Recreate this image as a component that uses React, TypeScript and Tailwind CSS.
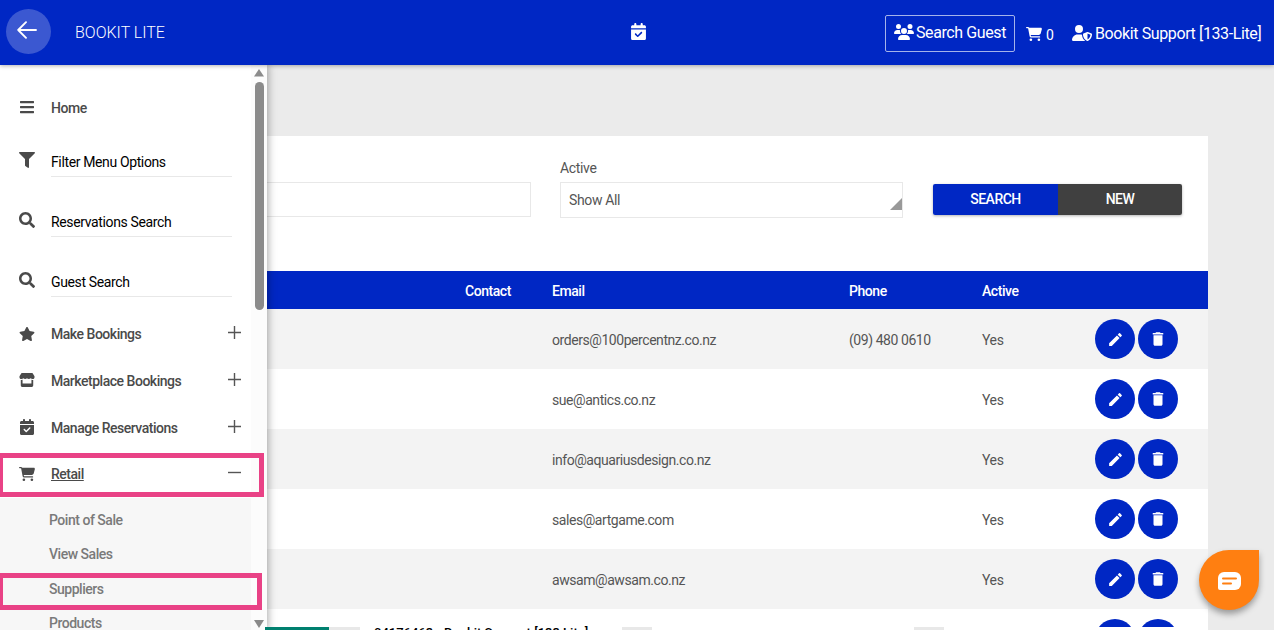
import React from 'react';
import { FaBars, FaFilter, FaSearch, FaStar } from 'react-icons/fa';
import { FaCalendarCheck, FaCartShopping, FaStore, FaUserShield } from 'react-icons/fa6';
import { MdDelete, MdEdit } from 'react-icons/md';

const suppliers = [
  { email: 'orders@100percentnz.co.nz', phone: '(09) 480 0610', active: 'Yes' },
  { email: 'sue@antics.co.nz', phone: '', active: 'Yes' },
  { email: 'info@aquariusdesign.co.nz', phone: '', active: 'Yes' },
  { email: 'sales@artgame.com', phone: '', active: 'Yes' },
  { email: 'awsam@awsam.co.nz', phone: '', active: 'Yes' },
  { email: '', phone: '', active: '' },
];

const searches = [
  { label: 'Filter Menu Options', icon: FaFilter },
  { label: 'Reservations Search', icon: FaSearch },
  { label: 'Guest Search', icon: FaSearch },
];

const menus = [
  { label: 'Make Bookings', icon: FaStar, open: false },
  { label: 'Marketplace Bookings', icon: FaStore, open: false },
  { label: 'Manage Reservations', icon: FaCalendarCheck, open: false },
  { label: 'Retail', icon: FaCartShopping, open: true },
];

const GroupIcon: React.FC = () => (
  <svg viewBox="0 0 640 512" className="h-4 w-5 shrink-0 fill-current">
    <path d="M144 0a80 80 0 1 1 0 160A80 80 0 1 1 144 0zM512 0a80 80 0 1 1 0 160A80 80 0 1 1 512 0zM0 298.700C0 239.800 47.800 192 106.700 192h42.700c15.900 0 31 3.500 44.600 9.700c-1.300 7.200-1.900 14.700-1.900 22.300c0 38.200 16.800 72.500 43.300 96H21.300C9.600 320 0 310.400 0 298.700zM405.300 320h-.7c26.600-23.500 43.300-57.800 43.300-96c0-7.600-.7-15-1.900-22.300c13.600-6.300 28.700-9.700 44.600-9.700h42.700C592.200 192 640 239.800 640 298.700c0 11.800-9.600 21.300-21.300 21.300H405.300zM224 224a96 96 0 1 1 192 0a96 96 0 1 1-192 0zM128 485.300C128 411.700 187.700 352 261.300 352h117.400C452.300 352 512 411.700 512 485.300c0 14.700-11.900 26.700-26.700 26.700H154.700C139.900 512 128 500.100 128 485.300z" />
  </svg>
);

const Header: React.FC = () => (
  <header className="relative z-30 flex h-[65px] shrink-0 items-center bg-[#0027c4] text-white shadow-[0_1px_4px_rgba(0,0,0,0.3)]">
    <div className="flex w-[630px] items-center pb-[3px] pl-1.5">
      <button className="flex size-[45px] items-center justify-center rounded-full bg-[#3b58d1]">
        <svg viewBox="0 0 20 18" className="mr-[3px] mb-0.5 h-[18px] w-5" fill="none" stroke="currentColor" strokeWidth="1.9" strokeLinecap="round" strokeLinejoin="round">
          <path d="M9 1.200 1.200 9 9 16.800M1.200 9H19" />
        </svg>
      </button>
      <span className="mt-[3px] ml-6 text-base font-light">BOOKIT LITE</span>
    </div>
    <FaCalendarCheck className="-mt-0.5 size-[17px]" />
    <div className="ml-auto flex w-[389px] items-center">
      <button className="mt-px flex h-[37px] w-[130px] items-center rounded-xs border border-[#a5b3ea] pl-2">
        <span className="pb-0.5"><GroupIcon /></span>
        <span className="ml-0.5 text-base tracking-[-0.4px] whitespace-nowrap">Search Guest</span>
      </button>
      <FaCartShopping className="mt-0.5 ml-[11px] size-4" />
      <span className="mt-1 ml-1 text-sm">0</span>
      <FaUserShield className="ml-[18px] h-4 w-5" />
      <span className="mt-0.5 ml-[3px] text-base tracking-[-0.38px] whitespace-nowrap">Bookit Support [133-Lite]</span>
    </div>
  </header>
);

const Sidebar: React.FC = () => (
  <aside className="absolute inset-y-0 left-0 z-20 flex w-[267px] overflow-hidden bg-white text-sm font-medium tracking-[-0.48px] text-[#4a4a4a] shadow-[1px_0_8px_rgba(0,0,0,0.35)]">
    <nav className="flex w-[251px] shrink-0 flex-col">
      <div className="mt-5 flex h-[46px] shrink-0 items-center pl-[19px]">
        <FaBars className="mb-0.5 size-4" />
        <span className="ml-4">Home</span>
      </div>
      {searches.map(({ label, icon: Icon }) => (
        <div key={label} className="flex h-[60px] shrink-0 items-center pl-[19px]">
          <Icon className="mb-0.5 size-4" />
          <span className="ml-4 flex h-8 w-[181px] items-center border-b border-[#e8e8e8] pt-0.5 font-normal tracking-[-0.37px] text-black">{label}</span>
        </div>
      ))}
      {menus.map(({ label, icon: Icon, open }) => (
        <div key={label} className="flex h-[46.670px] shrink-0 items-center pl-[19px]">
          <Icon className="mb-px size-4 shrink-0" />
          <span className={open ? 'ml-4 underline' : 'ml-4'}>{label}</span>
          <svg viewBox="0 0 13 13" className="mr-2.5 mb-[3px] ml-auto size-[13px]" stroke="#555" strokeWidth="1.400">
            <path d={open ? 'M0 6.500h13' : 'M0 6.500h13M6.500 0v13'} />
          </svg>
        </div>
      ))}
      <div className="flex grow flex-col bg-[#f7f7f7] pt-[5px] pl-[49px] text-[#7a7a7a]">
        {['Point of Sale', 'View Sales', 'Suppliers', 'Products'].map((item) => (
          <span key={item} className="flex h-[34.500px] shrink-0 items-center">{item}</span>
        ))}
      </div>
    </nav>
    {/* Scrollbar */}
    <div className="flex w-4 flex-col items-center bg-[#fcfcfc] pt-1">
      <svg viewBox="0 0 10 8" className="h-2 w-2.5 fill-[#8b8b8b]"><path d="M5 0 10 7.500H0z" /></svg>
      <div className="mt-[5px] h-[228px] w-[9px] rounded-full bg-[#8b8b8b]" />
      <svg viewBox="0 0 10 8" className="mt-auto mb-0.5 h-2 w-2.5 fill-[#8b8b8b]"><path d="M5 8 10 0H0z" /></svg>
    </div>
    {/* Highlighted entries */}
    <div className="absolute top-[388px] left-[-2px] h-11 w-[266px] border-[5px] border-[#e94286]" />
    <div className="absolute top-[508px] left-[-2px] h-[37px] w-[264px] border-[5px] border-[#e94286]" />
  </aside>
);

const Filters: React.FC = () => (
  <div className="flex h-[135px] shrink-0 pt-6 text-sm text-[#555]">
    <div className="mt-[22px] h-[35px] w-[531px] border border-[#e8e8e8]" />
    <div className="ml-[29px] w-[343px] tracking-[-0.35px]">
      <div className="h-[22px] leading-4">Active</div>
      <div className="flex h-9 items-center justify-between border border-[#e8e8e8] pl-2">
        <span>Show All</span>
        <svg viewBox="0 0 12 12" className="mt-2 size-3 fill-[#999]"><path d="M12 0v12H0z" /></svg>
      </div>
    </div>
    <div className="mt-6 ml-[30px] flex h-[31px] w-[249px] overflow-hidden rounded-xs text-center leading-[31px] font-medium tracking-[-0.5px] text-white shadow-[0_1px_3px_rgba(0,0,0,0.3)]">
      <button className="w-[125px] bg-[#0027c4]">SEARCH</button>
      <button className="grow bg-[#404040]">NEW</button>
    </div>
  </div>
);

const App: React.FC = () => {
  return (
    <div className="relative flex h-[630px] w-[1274px] flex-col overflow-hidden bg-[#ebebeb] font-['Roboto',sans-serif]">
      <Header />
      <div className="relative h-[565px]">
        <Sidebar />
        <main className="h-full pt-[71px]">
          <div className="h-[494px] w-[1208px] overflow-hidden bg-white">
            <Filters />
            <div className="grid h-[38px] grid-cols-[465px_87px_297px_133px_113px_1fr] items-center bg-[#0027c4] pt-0.5 text-sm font-medium tracking-[-0.45px] text-white">
              <span className="col-start-2">Contact</span>
              <span>Email</span>
              <span>Phone</span>
              <span>Active</span>
            </div>
            {suppliers.map((s, i) => (
              <div key={i} className="grid h-15 grid-cols-[465px_87px_297px_133px_113px_1fr] items-center text-sm tracking-[-0.440px] text-[#555] odd:bg-[#f3f3f3] even:bg-white">
                <span className="col-start-3 pt-0.5">{s.email}</span>
                <span className="pt-0.5">{s.phone}</span>
                <span className="pt-0.5 tracking-[-0.35px]">{s.active}</span>
                <div className="flex gap-[3px] text-white">
                  <button className="flex size-10 items-center justify-center rounded-full bg-[#0027c4]">
                    <MdEdit className="size-[17px]" />
                  </button>
                  <button className="flex size-10 items-center justify-center rounded-full bg-[#0027c4]">
                    <MdDelete className="size-[18px]" />
                  </button>
                </div>
              </div>
            ))}
          </div>
        </main>
      </div>
      {/* Status bar peeking in at the bottom edge */}
      <div className="absolute bottom-0 left-[265px] z-30 flex h-[3px] w-[942px]">
        <div className="w-16 bg-[#00806f]" />
        <div className="w-[31px] bg-[#e8e8e8]" />
        <div className="w-[262px] bg-white">
          <p className="-mt-0.5 pl-3.5 text-[13px] leading-4 font-medium whitespace-nowrap text-black">04176463 - Bookit Support [133 Lite]</p>
        </div>
        <div className="w-[30px] bg-[#e8e8e8]" />
        <div className="w-[262px] bg-white" />
        <div className="w-[30px] bg-[#e8e8e8]" />
        <div className="grow bg-white" />
      </div>
      {/* Chat launcher */}
      <button className="absolute top-[550px] left-[1199px] z-30 flex size-[60px] items-center justify-center rounded-full rounded-tr-lg bg-[#ff7f11] shadow-[0_4px_6px_rgba(0,0,0,0.35)]">
        <svg viewBox="0 0 23 18" className="mt-0.5 h-[18px] w-[23px]">
          <path fill="#fff" d="M6 0h11a6 6 0 0 1 6 6v6a6 6 0 0 1-6 6H2a2 2 0 0 1-2-2V6a6 6 0 0 1 6-6z" />
          <path stroke="#ff7f11" strokeWidth="2" strokeLinecap="round" d="M5 6.500h13M5 11.500h8" />
        </svg>
      </button>
    </div>
  );
};

export default App;
